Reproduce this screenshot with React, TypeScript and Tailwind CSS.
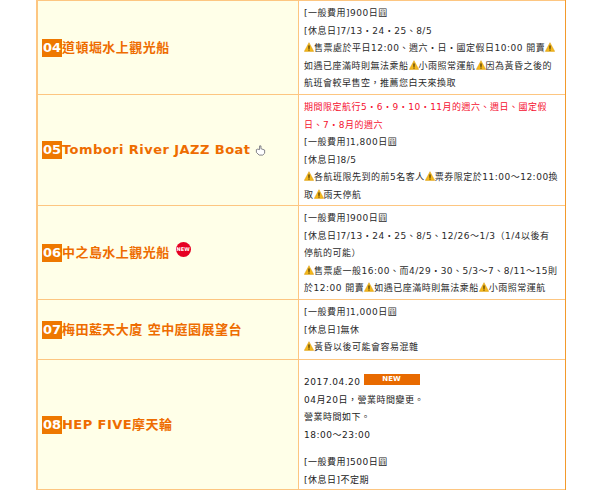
import type { ReactNode } from 'react';

const Warn = () => (
  <svg viewBox="0 0 16 16" className="inline-block w-[10px] h-[10px] align-[-1px]">
    <path d="M8 1 L15.5 15 H0.5 Z" fill="#f5b81a" stroke="#d99a10" strokeWidth="0.8" strokeLinejoin="round" />
    <rect x="7.1" y="5.5" width="1.8" height="5.5" fill="#3a2c08" />
    <rect x="7.1" y="12" width="1.8" height="1.8" fill="#3a2c08" />
  </svg>
);

const Hand = () => (
  <svg viewBox="0 0 12 12" className="w-[11px] h-[11px] ml-[5px] mt-px" fill="#fff" stroke="#77777f" strokeWidth="1">
    <path d="M5 1 L6.5 1 L6.5 4 L10.5 5.5 L10.5 9 L8.5 11 L4.5 11 L1.5 8 L1.5 5 L3 4.5 L5 5 Z" />
  </svg>
);

const NewBadge = () => (
  <span className="ml-[6px] mb-1.5 w-[15px] h-[15px] rounded-full bg-[#e60023] text-white text-[5px] leading-[15px] text-center font-bold">
    NEW
  </span>
);

function Row({ num, title, extra, height, children }: { num: string; title: string; extra?: ReactNode; height: string; children: ReactNode }) {
  return (
    <div className={`flex border-b border-[#fdc681] ${height}`}>
      <div className="w-[261px] shrink-0 bg-[#ffffe8] border-r border-[#fdc681] flex items-center pl-[4px]">
        <span className="w-[20px] h-[18px] bg-[#ee7800] text-white text-[13px] leading-[18px] font-bold text-center shrink-0">{num}</span>
        <span className="text-[#ee6c00] text-[13px] font-bold tracking-[0.45px] whitespace-nowrap">{title}</span>
        {extra}
      </div>
      <div className="flex-1 pl-[5px] pt-[4px] text-[#2a2a2a] text-[9px] leading-[17.5px] tracking-[0.5px] whitespace-nowrap">{children}</div>
    </div>
  );
}

export default function App() {
  return (
    <div className="w-[600px] h-[490px] overflow-hidden bg-white font-['Verdana','DejaVu_Sans','Noto_Sans_CJK_TC',sans-serif]">
      <div className="ml-[36px] w-[530px] border-l-2 border-r border-l-[#fdc681] border-r-[#f39a2c]">
        <div className="h-px bg-[#fdc681]" />
        <Row num="04" title="道頓堀水上觀光船" height="h-[94px]">
          <p>[一般費用]900日圓</p>
          <p>[休息日]7/13・24・25、8/5</p>
          <p><Warn />售票處於平日12:00、週六・日・國定假日10:00 開賣<Warn /></p>
          <p>如遇已座滿時則無法乘船<Warn />小雨照常運航<Warn />因為黃昏之後的</p>
          <p>航班會較早售空，推薦您白天來換取</p>
        </Row>
        <Row num="05" title="Tombori River JAZZ Boat" extra={<Hand />} height="h-[111px]">
          <p className="text-[#f5102f]">期間限定航行5・6・9・10・11月的週六、週日、國定假</p>
          <p className="text-[#f5102f]">日、7・8月的週六</p>
          <p>[一般費用]1,800日圓</p>
          <p>[休息日]8/5</p>
          <p><Warn />各航班限先到的前5名客人<Warn />票券限定於11:00～12:00換</p>
          <p>取<Warn />雨天停航</p>
        </Row>
        <Row num="06" title="中之島水上觀光船" extra={<NewBadge />} height="h-[94px]">
          <p>[一般費用]900日圓</p>
          <p>[休息日]7/13・24・25、8/5、12/26～1/3（1/4以後有</p>
          <p>停航的可能）</p>
          <p><Warn />售票處一般16:00、而4/29・30、5/3～7、8/11～15則</p>
          <p>於12:00 開賣<Warn />如遇已座滿時則無法乘船<Warn />小雨照常運航</p>
        </Row>
        <Row num="07" title="梅田藍天大廈 空中庭園展望台" height="h-[60px]">
          <p>[一般費用]1,000日圓</p>
          <p>[休息日]無休</p>
          <p><Warn />黃昏以後可能會容易混雜</p>
        </Row>
        <Row num="08" title="HEP FIVE摩天輪" height="h-[130px]">
          <div className="pt-[10px] text-[#222]">
            <p className="flex items-start">2017.04.20<span className="ml-[3px] w-[56px] h-[11px] bg-[#e86a00] text-white text-[7px] leading-[11px] tracking-normal text-center font-bold">NEW</span></p>
            <p>04月20日，營業時間變更。</p>
            <p>營業時間如下。</p>
            <p>18:00～23:00</p>
            <p className="mt-[10px]">[一般費用]500日圓</p>
            <p>[休息日]不定期</p>
          </div>
        </Row>
      </div>
    </div>
  );
}
